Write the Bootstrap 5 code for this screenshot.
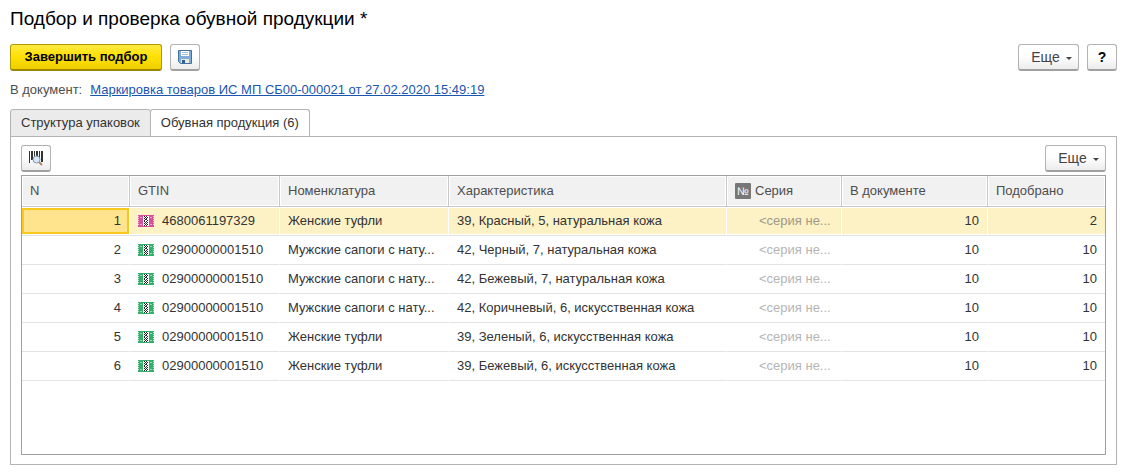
<!DOCTYPE html>
<html lang="ru">
<head>
<meta charset="utf-8">
<meta name="viewport" content="width=device-width, initial-scale=1">
<title>Подбор и проверка обувной продукции</title>
<link href="https://cdn.jsdelivr.net/npm/bootstrap@5.3.0/dist/css/bootstrap.min.css" rel="stylesheet">
<style>
body{font-family:"Liberation Sans",Arial,sans-serif;font-size:13px;line-height:16px;color:#333;background:#fff;padding:8px 18px 9px 10px}
h1{font-size:19px;line-height:22px;color:#000;font-weight:400;margin-bottom:14px}
.tool{--bs-btn-font-size:13px;--bs-btn-line-height:16px;--bs-btn-border-radius:3px;--bs-btn-padding-x:0;--bs-btn-padding-y:0;height:27px;min-width:30px;color:#444;border:1px solid #b3b3b3;border-bottom:2px solid #a0a0a0;background:linear-gradient(#fff 45%,#ececec);display:inline-flex;align-items:center;justify-content:center}
.tool:hover{color:#000;border-color:#999;background:#f2f2f2}
.more{--bs-btn-font-size:14px;width:61px;gap:6px;padding-left:6px}
.more::after{margin:2px 0 0;border-top-width:3px;border-left-width:3px;border-right-width:3px}
.help{--bs-btn-font-size:14px;font-weight:700;color:#000}
.finish{width:152px;font-weight:700;color:#000;border-color:#b09a00 #b09a00 #9c8800;background:linear-gradient(#ffe944,#ffe000 50%,#efcf00)}
.finish:hover{background:#ffe000;border-color:#9c8800}
.docline{color:#4d4d4d;margin:11px 0}
.docline a{color:#1a55b0}
.nav-tabs{--bs-nav-tabs-border-color:#b3b3b3;--bs-nav-tabs-border-radius:3px;--bs-nav-tabs-link-active-border-color:#b3b3b3 #b3b3b3 #fff;border-bottom:0}
.nav-tabs .nav-link{font-size:13px;line-height:16px;padding:5px 10px;color:#333;background:#ebebeb;border-color:#b3b3b3;margin:0 0 -1px}
.nav-tabs .nav-item + .nav-item{margin-left:-1px}
.nav-tabs .nav-link.active{background:#fff;color:#333;border-bottom-color:#fff}
.panel{border:1px solid #b3b3b3;padding:8px 10px 9px}
.toolbar{margin-bottom:3px}
.gridbox{border:1px solid #a0a0a0}
.goods{table-layout:fixed;width:100%;border-collapse:separate;border-spacing:0;margin:0}
.goods th,.goods td{padding:0 8px;white-space:nowrap;overflow:hidden;border:0 solid #fff;border-right-width:1px;vertical-align:middle}
.goods th{height:31px;font-weight:400;color:#4d4d4d;background:#f1f1f1;box-shadow:inset 0 0 0 1px #fff;border-right-color:#c8c8c8;border-bottom:1px solid #c8c8c8}
.goods td{height:29px;border-bottom:1px solid #e3e3e3}
.goods th:last-child,.goods td:last-child{border-right-width:0}
.goods td.num{text-align:right}
.goods .chosen td{background:#fdf1c6;box-shadow:inset 0 1px #fff,inset 0 -1px #fff}
.goods .chosen td.cursor{background:#ffe48d;box-shadow:inset 0 1px #fff,inset 0 -1px #fff,inset 0 3px #f8c91c,inset 0 -3px #f8c91c,inset 2px 0 #f8c91c,inset -2px 0 #f8c91c}
.goods td.series{padding-left:32px;color:#b5b5b5}
.goods .chosen td.series{color:#a09a86}
.col-n{width:108px}.col-gtin{width:150px}.col-item{width:169px}.col-series{width:115px}.col-doc{width:146px}.col-picked{width:117px}
.numsign{width:16px;height:16px;background:#777;color:#fff;font-size:11px;border-radius:1px}
.pink{color:#d94f9b}
.green{color:#35b06c}
</style>
</head>
<body class="d-flex flex-column min-vh-100">
<svg width="0" height="0" class="position-absolute" aria-hidden="true">
<defs>
<symbol id="mark" viewBox="0 0 16 12">
<path d="M0 0h16v12H0z" fill="currentColor"/>
<path d="M0 1h1v1H0zM0 3h1v1H0zM0 5h1v1H0zM0 7h1v1H0zM0 9h1v1H0zM15 1h1v1h-1zM15 3h1v1h-1zM15 5h1v1h-1zM15 7h1v1h-1zM15 9h1v1h-1z" fill="#fff" opacity=".7"/>
<path d="M2 2h2v1H3v6h1v1H2V9h1V3H2zM12 2h2v1h-1v6h1v1h-2V9h1V3h-1z" fill="#fff" opacity=".5"/>
<path d="M5 1h6v10H5z" fill="#fff"/>
<path d="M6 1h1v1H6zM8 1h1v1H8zM7 2h1v1H7zM9 2h1v1H9zM6 3h1v1H6zM8 3h1v1H8zM7 4h2v1H7zM6 5h1v2H6zM9 5h1v1H9zM8 6h1v1H8zM7 7h1v1H7zM9 7h1v1H9zM6 8h1v1H6zM8 8h1v1H8zM7 9h1v1H7zM9 9h1v1H9zM6 10h1v1H6zM8 10h1v1H8z" fill="#222"/>
</symbol>
</defs>
</svg>

<h1>Подбор и проверка обувной продукции *</h1>

<div class="d-flex align-items-center">
<button type="button" class="btn tool finish">Завершить подбор</button>
<button type="button" class="btn tool ms-2" aria-label="Записать">
<svg width="14" height="14" viewBox="0 0 14 14" aria-hidden="true"><path d="M.5.5h13v13h-11l-2-2z" fill="#82acd8" stroke="#45709c"/><path d="M3 1h8v5H3z" fill="#fff"/><path d="M4 2.5h6M4 4.5h6" stroke="#a9bfd4"/><path d="M3 9h8v4H3z" fill="#e8e8df"/><path d="M4 10h3v3H4z" fill="#315f90"/></svg>
</button>
<button type="button" class="btn tool more dropdown-toggle ms-auto">Еще</button>
<button type="button" class="btn tool help ms-2">?</button>
</div>

<div class="docline d-flex gap-2">
<span>В документ:</span><a href="#">Маркировка товаров ИС МП СБ00-000021 от 27.02.2020 15:49:19</a>
</div>

<ul class="nav nav-tabs" role="tablist">
<li class="nav-item" role="presentation"><button type="button" class="nav-link" role="tab" aria-selected="false">Структура упаковок</button></li>
<li class="nav-item" role="presentation"><button type="button" class="nav-link active" role="tab" aria-selected="true">Обувная продукция (6)</button></li>
</ul>

<main class="panel flex-grow-1 d-flex flex-column">
<div class="toolbar d-flex justify-content-between">
<button type="button" class="btn tool" aria-label="Поиск по штрихкоду">
<svg width="16" height="16" viewBox="0 0 16 16" aria-hidden="true"><path d="M1 1h1v12H1zM3 1h2v9H3zM6 1h1v9H6zM8 1h2v6H8zM11 1h1v9h-1zM13 1h2v11h-2z" fill="#333"/><path d="M11 12l3 3" stroke="#b98260" stroke-width="2"/><circle cx="8.500" cy="9.500" r="3.500" fill="#d5e8fb" stroke="#8999ac"/></svg>
</button>
<button type="button" class="btn tool more dropdown-toggle">Еще</button>
</div>
<div class="gridbox flex-grow-1">
<table class="goods">
<colgroup><col class="col-n"><col class="col-gtin"><col class="col-item"><col><col class="col-series"><col class="col-doc"><col class="col-picked"></colgroup>
<thead><tr><th scope="col">N</th><th scope="col">GTIN</th><th scope="col">Номенклатура</th><th scope="col">Характеристика</th><th scope="col"><div class="d-flex align-items-center gap-1"><span class="numsign d-inline-flex align-items-center justify-content-center">№</span>Серия</div></th><th scope="col">В документе</th><th scope="col">Подобрано</th></tr></thead>
<tbody>
<tr class="chosen"><td class="num cursor">1</td><td><div class="d-flex align-items-center gap-2"><svg width="16" height="12" class="pink" aria-hidden="true"><use href="#mark"/></svg>4680061197329</div></td><td>Женские туфли</td><td>39, Красный, 5, натуральная кожа</td><td class="series">&lt;серия не...</td><td class="num">10</td><td class="num">2</td></tr>
<tr><td class="num">2</td><td><div class="d-flex align-items-center gap-2"><svg width="16" height="12" class="green" aria-hidden="true"><use href="#mark"/></svg>02900000001510</div></td><td>Мужские сапоги с нату...</td><td>42, Черный, 7, натуральная кожа</td><td class="series">&lt;серия не...</td><td class="num">10</td><td class="num">10</td></tr>
<tr><td class="num">3</td><td><div class="d-flex align-items-center gap-2"><svg width="16" height="12" class="green" aria-hidden="true"><use href="#mark"/></svg>02900000001510</div></td><td>Мужские сапоги с нату...</td><td>42, Бежевый, 7, натуральная кожа</td><td class="series">&lt;серия не...</td><td class="num">10</td><td class="num">10</td></tr>
<tr><td class="num">4</td><td><div class="d-flex align-items-center gap-2"><svg width="16" height="12" class="green" aria-hidden="true"><use href="#mark"/></svg>02900000001510</div></td><td>Мужские сапоги с нату...</td><td>42, Коричневый, 6, искусственная кожа</td><td class="series">&lt;серия не...</td><td class="num">10</td><td class="num">10</td></tr>
<tr><td class="num">5</td><td><div class="d-flex align-items-center gap-2"><svg width="16" height="12" class="green" aria-hidden="true"><use href="#mark"/></svg>02900000001510</div></td><td>Женские туфли</td><td>39, Зеленый, 6, искусственная кожа</td><td class="series">&lt;серия не...</td><td class="num">10</td><td class="num">10</td></tr>
<tr><td class="num">6</td><td><div class="d-flex align-items-center gap-2"><svg width="16" height="12" class="green" aria-hidden="true"><use href="#mark"/></svg>02900000001510</div></td><td>Женские туфли</td><td>39, Бежевый, 6, искусственная кожа</td><td class="series">&lt;серия не...</td><td class="num">10</td><td class="num">10</td></tr>
</tbody>
</table>
</div>
</main>
<script src="https://cdn.jsdelivr.net/npm/bootstrap@5.3.0/dist/js/bootstrap.bundle.min.js"></script>
</body>
</html>
